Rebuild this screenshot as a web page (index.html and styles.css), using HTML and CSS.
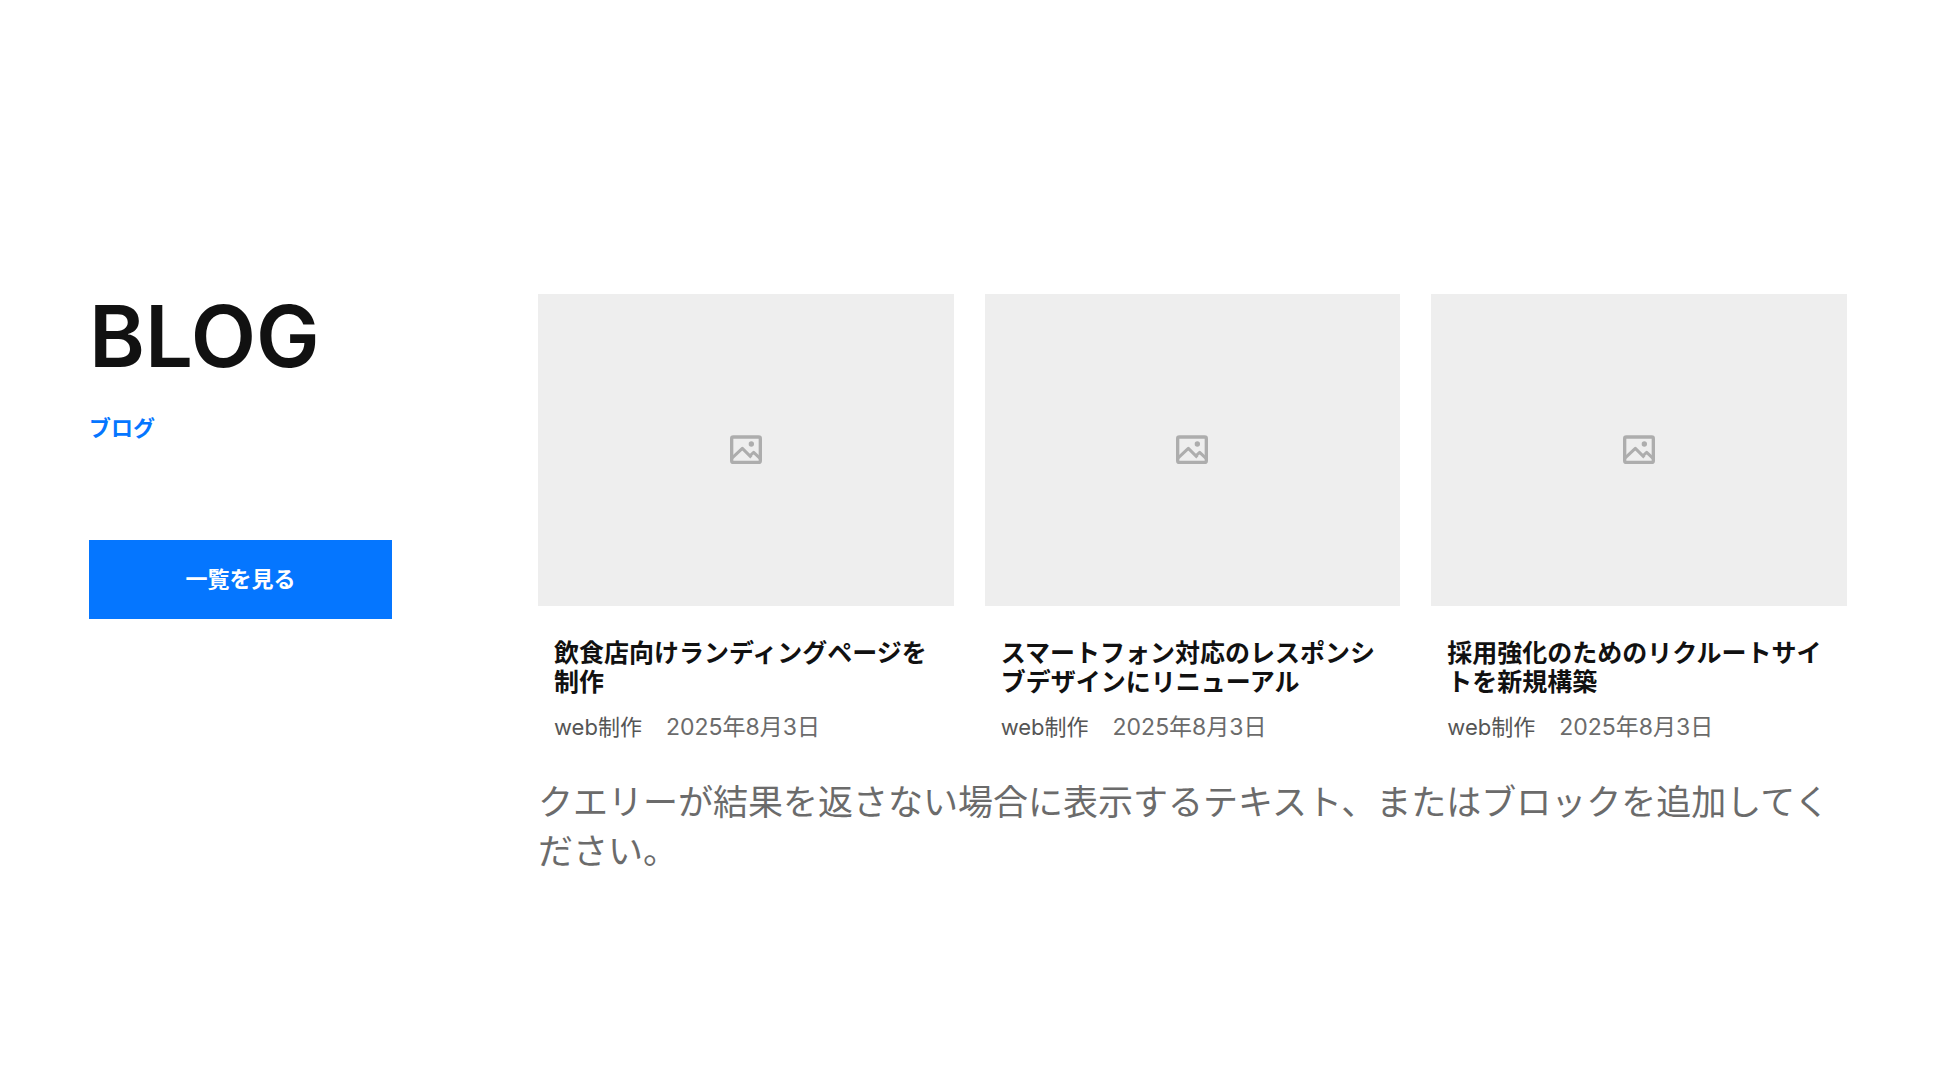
FILE: index.html
```html
<!DOCTYPE html>
<html lang="ja">
<head>
    <meta charset="UTF-8">
    <meta name="viewport" content="width=device-width, initial-scale=1.0">
    <title>BLOG</title>
    <link rel="stylesheet" href="styles.css">
</head>
<body>

<!-- アイコン定義 -->
<svg class="icon-defs" aria-hidden="true">
    <symbol id="icon-image" viewBox="0 0 96 87">
        <rect x="5" y="6" width="86" height="76" rx="5" fill="none" stroke="currentColor" stroke-width="10"/>
        <path d="M5 70 L37 40 L64 67 M59 63 L71 52 L91 71" fill="none" stroke="currentColor" stroke-width="9" stroke-linejoin="round"/>
        <circle cx="64" cy="27" r="8" fill="currentColor"/>
    </symbol>
</svg>

<section class="blog">
    <div class="blog-head">
        <h2 class="blog-title">BLOG</h2>
        <p class="blog-subtitle">ブログ</p>
        <a class="blog-button" href="#">一覧を見る</a>
    </div>

    <div class="blog-body">
        <ul class="post-list">
            <li class="post">
                <div class="post-thumb"><svg class="post-icon"><use href="#icon-image"/></svg></div>
                <div class="post-text">
                    <h3 class="post-title">飲食店向けランディングページを制作</h3>
                    <div class="post-meta">
                        <span class="post-category">web制作</span>
                        <time class="post-date" datetime="2025-08-03">2025年8月3日</time>
                    </div>
                </div>
            </li>
            <li class="post">
                <div class="post-thumb"><svg class="post-icon"><use href="#icon-image"/></svg></div>
                <div class="post-text">
                    <h3 class="post-title">スマートフォン対応のレスポンシブデザインにリニューアル</h3>
                    <div class="post-meta">
                        <span class="post-category">web制作</span>
                        <time class="post-date" datetime="2025-08-03">2025年8月3日</time>
                    </div>
                </div>
            </li>
            <li class="post">
                <div class="post-thumb"><svg class="post-icon"><use href="#icon-image"/></svg></div>
                <div class="post-text">
                    <h3 class="post-title">採用強化のためのリクルートサイトを新規構築</h3>
                    <div class="post-meta">
                        <span class="post-category">web制作</span>
                        <time class="post-date" datetime="2025-08-03">2025年8月3日</time>
                    </div>
                </div>
            </li>
        </ul>
        <p class="no-results">クエリーが結果を返さない場合に表示するテキスト、またはブロックを追加してください。</p>
    </div>
</section>

</body>
</html>
```
FILE: styles.css
```css
* {
    box-sizing: border-box;
}

body {
    margin: 0;
    background-color: #fff;
    color: #111;
    font-family: Inter, "Noto Sans CJK JP", sans-serif;
}

h2, h3, p, ul {
    margin: 0;
    padding: 0;
}

.icon-defs {
    display: none;
}

.blog {
    display: grid;
    grid-template-columns: 303px 1fr;
    gap: 146px;
    padding: 294px 93px 200px 89px;
}

.blog-title {
    font-size: 85px;
    font-weight: 600;
    line-height: 85px;
}

.blog-subtitle {
    margin-top: 32px;
    color: #0576ff;
    font-size: 22px;
    font-weight: 700;
    line-height: 34px;
}

.blog-button {
    display: block;
    margin-top: 95px;
    padding: 22px;
    background-color: #0576ff;
    color: #fff;
    font-size: 22px;
    font-weight: 700;
    line-height: 35px;
    text-align: center;
    text-decoration: none;
}

/* 記事一覧 */
.post-list {
    display: grid;
    grid-template-columns: repeat(3, 1fr);
    gap: 31px;
    list-style: none;
}

.post-thumb {
    display: flex;
    justify-content: center;
    align-items: center;
    aspect-ratio: 4 / 3;
    background-color: #eee;
    color: #adadad;
}

.post-icon {
    width: 32px;
    height: 29px;
}

.post-text {
    padding: 33px 16px 0;
}

.post-title {
    font-size: 25px;
    font-weight: 700;
    line-height: 29px;
}

.post-meta {
    display: flex;
    gap: 24px;
    margin-top: 13px;
    font-size: 22px;
    line-height: 35px;
}

.post-category {
    color: #555;
}

.post-date {
    color: #6b6b6b;
    font-size: 23px;
}

.no-results {
    margin-top: 33px;
    color: #6b6b6b;
    font-size: 35px;
    line-height: 49px;
}
```
